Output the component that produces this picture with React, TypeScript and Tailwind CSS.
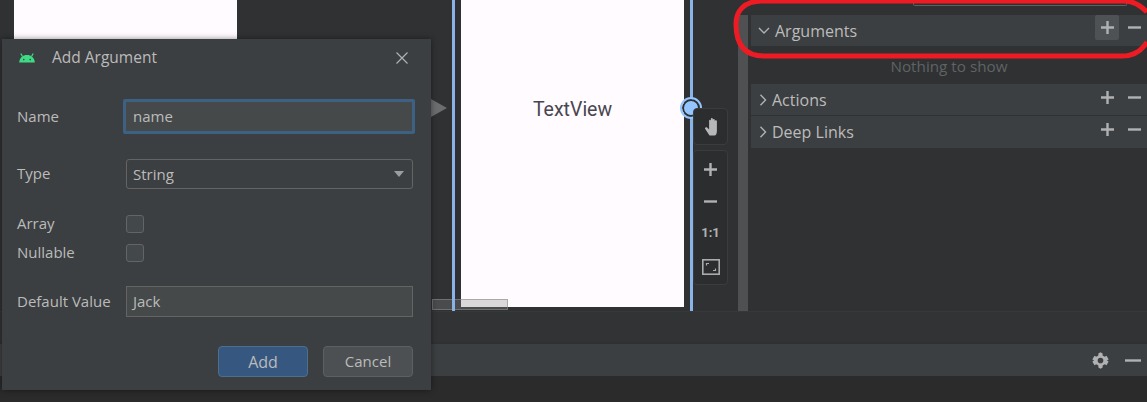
import React from "react";

const ui = "font-['Open_Sans',sans-serif]";

function AndroidIcon() {
  return (
    <svg width="18" height="14" viewBox="0 0 18 14" fill="none">
      <path d="M1.2 11.5 C1.5 6.5 5 4 9 4 C13 4 16.5 6.5 16.8 11.5 Z" fill="#3ddc84" />
      <path d="M4.5 5.5 L2.8 2.5 M13.5 5.5 L15.2 2.5" stroke="#3ddc84" strokeWidth="1.2" />
      <circle cx="5.8" cy="8.6" r="0.8" fill="#3c3f41" />
      <circle cx="12.2" cy="8.6" r="0.8" fill="#3c3f41" />
    </svg>
  );
}

function Plus({ color = "#afb1b3" }: { color?: string }) {
  return (
    <svg width="13" height="13" viewBox="0 0 13 13">
      <path d="M6.5 0 V13 M0 6.5 H13" stroke={color} strokeWidth="2.4" />
    </svg>
  );
}

function Minus({ width = 13 }: { width?: number }) {
  return (
    <svg width={width} height="13" viewBox={`0 0 ${width} 13`}>
      <path d={`M0 6.5 H${width}`} stroke="#afb1b3" strokeWidth="2.4" />
    </svg>
  );
}

function Chevron({ open }: { open?: boolean }) {
  return (
    <svg width="12" height="12" viewBox="0 0 12 12" fill="none">
      <path d={open ? "M1 3 L6 8 L11 3" : "M3.5 0.8 L8.5 6 L3.5 11.2"} stroke="#afb1b3" strokeWidth="1.4" />
    </svg>
  );
}

function SectionRow({ label, open, active, offset }: { label: string; open?: boolean; active?: boolean; offset: string }) {
  return (
    <div className={`flex items-center bg-[#3c3f41] ${open ? "pl-[7px]" : "pl-[6px]"} ${offset}`}>
      <Chevron open={open} />
      <span className={`text-[16px] text-[#bbbbbb] ${ui} ${open ? "ml-[5px]" : "ml-[3px]"}`}>{label}</span>
      <div className={`ml-auto flex items-center gap-[3px] self-start pr-px ${active ? "" : "mt-px"}`}>
        <span className={`flex h-[25px] w-[24px] items-center justify-center rounded-[2px] ${active ? "bg-[#4f5254]" : ""}`}>
          <Plus />
        </span>
        <span className="flex h-[25px] w-[24px] items-center justify-center"><Minus /></span>
      </div>
    </div>
  );
}

function Label({ children }: { children: React.ReactNode }) {
  return <span className={`-mt-[2px] w-[106px] shrink-0 text-[15px] leading-[20px] text-[#bbbbbb] ${ui}`}>{children}</span>;
}

function Dialog() {
  return (
    <div className="absolute left-[2px] top-[39px] flex h-[351px] w-[429px] flex-col bg-[#3c3f41] shadow-[0_0_6px_rgba(0,0,0,0.45)]">
      <div className="flex h-[38px] shrink-0 items-center pl-[16px] pr-[23px]">
        <AndroidIcon />
        <span className={`ml-[16px] text-[15.5px] text-[#bbbbbb] ${ui}`}>Add Argument</span>
        <svg className="ml-auto" width="12" height="12" viewBox="0 0 12 12" fill="none">
          <path d="M0.5 0.5 L11.5 11.5 M11.5 0.5 L0.5 11.5" stroke="#afb1b3" strokeWidth="1.2" />
        </svg>
      </div>

      <div className="flex flex-col pl-[15px]">
        <div className="mt-[22px] flex h-[35px] items-center">
          <Label>Name</Label>
          <div className="flex h-[35px] w-[292px] items-center rounded-[2px] border-[3px] border-[#3d6185] bg-[#45494a] pl-[7px]">
            <span className={`text-[15px] text-[#bbbbbb] ${ui}`}>name</span>
          </div>
        </div>
        <div className="mt-[25px] flex h-[30px] items-center">
          <Label>Type</Label>
          <div className="ml-[3px] flex h-[30px] w-[287px] items-center justify-between rounded-[3px] border border-[#646464] pl-[6px] pr-[8px]">
            <span className={`text-[15px] text-[#bbbbbb] ${ui}`}>String</span>
            <span className="h-0 w-0 border-x-[5.5px] border-t-[6px] border-x-transparent border-t-[#9a9da1]" />
          </div>
        </div>
        <div className="mt-[26px] flex h-[18px] items-center">
          <Label>Array</Label>
          <span className="ml-[3px] h-[18px] w-[18px] rounded-[3px] border border-[#646464] bg-[#43494a]" />
        </div>
        <div className="mt-[11px] flex h-[18px] items-center">
          <Label>Nullable</Label>
          <span className="ml-[3px] h-[18px] w-[18px] rounded-[3px] border border-[#646464] bg-[#43494a]" />
        </div>
        <div className="mt-[24px] flex h-[31px] items-center">
          <Label>Default Value</Label>
          <div className="ml-[3px] flex h-[31px] w-[287px] items-center border border-[#646464] bg-[#45494a] pl-[6px]">
            <span className={`text-[15px] text-[#bbbbbb] ${ui}`}>Jack</span>
          </div>
        </div>
      </div>

      <div className="mt-auto mb-[13px] flex justify-end gap-[15px] pr-[18px]">
        <button className={`h-[31px] w-[90px] rounded-[4px] border border-[#4c708c] bg-[#365880] text-[16px] text-[#bbbbbb] ${ui}`}>Add</button>
        <button className={`h-[31px] w-[90px] rounded-[4px] border border-[#5e6060] bg-[#4c5052] text-[15px] text-[#bbbbbb] ${ui}`}>Cancel</button>
      </div>
    </div>
  );
}

function ZoomControls() {
  return (
    <div className="absolute left-[693px] top-[108px] flex flex-col gap-[5px]">
      <div className="flex h-[37px] w-[35px] items-center justify-center rounded-[4px] border border-[#3a3c3e] bg-[#2b2d2e]">
        <svg width="16" height="19" viewBox="0 0 13 19">
          <path d="M5 18.5 L0.6 11.8 C0 10.5 1.6 9.6 2.6 10.6 L4.6 12.5 V3.6 C4.6 2.5 6.4 2.5 6.4 3.6 V9 V2 C6.4 0.8 8.3 0.8 8.3 2 V9 V2.8 C8.3 1.7 10.2 1.7 10.2 2.8 V9 V4 C10.2 2.9 12.4 2.9 12.4 4 V14 C12.4 16.5 11.5 18.5 10 18.5 Z" fill="#b5b7b9" />
        </svg>
      </div>
      <div className="flex h-[135px] w-[35px] flex-col items-center justify-between rounded-[4px] border border-[#3a3c3e] bg-[#2b2d2e] pb-[9px] pt-[12px]">
        <Plus color="#b0b2b4" />
        <Minus />
        <span className="font-['Roboto',sans-serif] text-[13px] font-bold leading-[14px] text-[#b0b2b4]">1:1</span>
        <svg width="18" height="16" viewBox="0 0 18 16" fill="none">
          <rect x="0.8" y="0.8" width="16.4" height="14.4" stroke="#a9abad" strokeWidth="1.6" />
          <path d="M4.5 6.5 V4.5 H7 M13.5 9.5 V11.5 H11" stroke="#a9abad" strokeWidth="1.2" />
        </svg>
      </div>
    </div>
  );
}

function DesignCanvas() {
  return (
    <div className="relative w-[738px] shrink-0">
      <div className="absolute left-[14px] top-0 h-[39px] w-[223px] bg-[#fffbfe]" />
      <div className="absolute left-[461px] top-0 flex h-[307px] w-[223px] justify-center bg-[#fffbfe] pt-[98px]">
        <span className="font-['Roboto',sans-serif] text-[19.5px] leading-[24px] text-[#49454f]">TextView</span>
      </div>
      <div className="absolute left-[432px] top-[299px] h-[11px] w-[76px] border border-[#888888]/60 bg-[#888888]/30" />
      <div className="absolute left-[452px] top-0 h-[311px] w-[3px] bg-[#8ab4e8]" />
      <div className="absolute left-[690px] top-0 h-[311px] w-[3px] bg-[#8ab4e8]" />
      <div className="absolute left-[431px] top-[99px] h-0 w-0 border-y-[9px] border-l-[16px] border-y-transparent border-l-[#6b6d6f]" />
      <div className="absolute left-[682px] top-[99px] h-[18px] w-[18px] rounded-full border-2 border-[#2f3133] bg-[#94c5ff] outline-[2px] outline-[#94c5ff]" />
      <ZoomControls />
    </div>
  );
}

function SidePanel() {
  return (
    <div className="relative flex min-w-0 flex-1 flex-col pl-[2px]">
      <div className="absolute left-[164px] top-0 h-[6px] w-[214px] rounded-b-[2px] border border-t-0 border-[#5e6060]" />
      <SectionRow label="Arguments" open active offset="mt-[15px] h-[31px]" />
      <div className={`flex h-[38px] items-center justify-center pt-[3px] text-[15.25px] text-[#5f6365] ${ui}`}>Nothing to show</div>
      <SectionRow label="Actions" offset="h-[31px]" />
      <SectionRow label="Deep Links" offset="mt-px h-[32px]" />
    </div>
  );
}

export default function App() {
  return (
    <div className="relative flex h-[402px] w-[1147px] flex-col overflow-hidden bg-[#2b2b2b]">
      <div className="flex h-[311px] shrink-0 bg-[#2f3133]">
        <DesignCanvas />
        <div className="mt-[15px] w-[10px] shrink-0 bg-[#4e5052]" />
        <div className="ml-px flex min-w-0 flex-1"><SidePanel /></div>
      </div>

      <div className="h-[31px] shrink-0 border-t border-[#36383a] bg-[#313335]" />

      <div className="flex h-[34px] shrink-0 items-center justify-end gap-[16px] border-t-2 border-[#2f3133] bg-[#3c3f41] pr-[6px]">
        <svg width="17" height="17" viewBox="0 0 24 24">
          <path fillRule="evenodd" d="M12 0.5 L15 2.2 V5 L18 6.7 L20.5 5.3 L23.5 10.5 L21 12 L23.5 13.5 L20.5 18.7 L18 17.3 L15 19 V22 L12 23.5 L9 22 V19 L6 17.3 L3.5 18.7 L0.5 13.5 L3 12 L0.5 10.5 L3.5 5.3 L6 6.7 L9 5 V2.2 Z M12 8 A4 4 0 1 0 12 16 A4 4 0 1 0 12 8 Z" fill="#afb1b3" />
        </svg>
        <Minus width={16} />
      </div>

      <div className="flex-1 bg-[#2b2b2b]" />

      <Dialog />

      {/* hand drawn highlight round the Arguments row */}
      <svg className="pointer-events-none absolute left-[730px] top-0" width="417" height="62" viewBox="0 0 417 62" fill="none">
        <path d="M417 12 C410 5 404 1 395 1 L32 1 C13 1 6 12 6 24 C6 44 14 56 34 56 L392 56 C404 56 412 50 417 42" stroke="#ed1c24" strokeWidth="5" />
      </svg>
    </div>
  );
}
